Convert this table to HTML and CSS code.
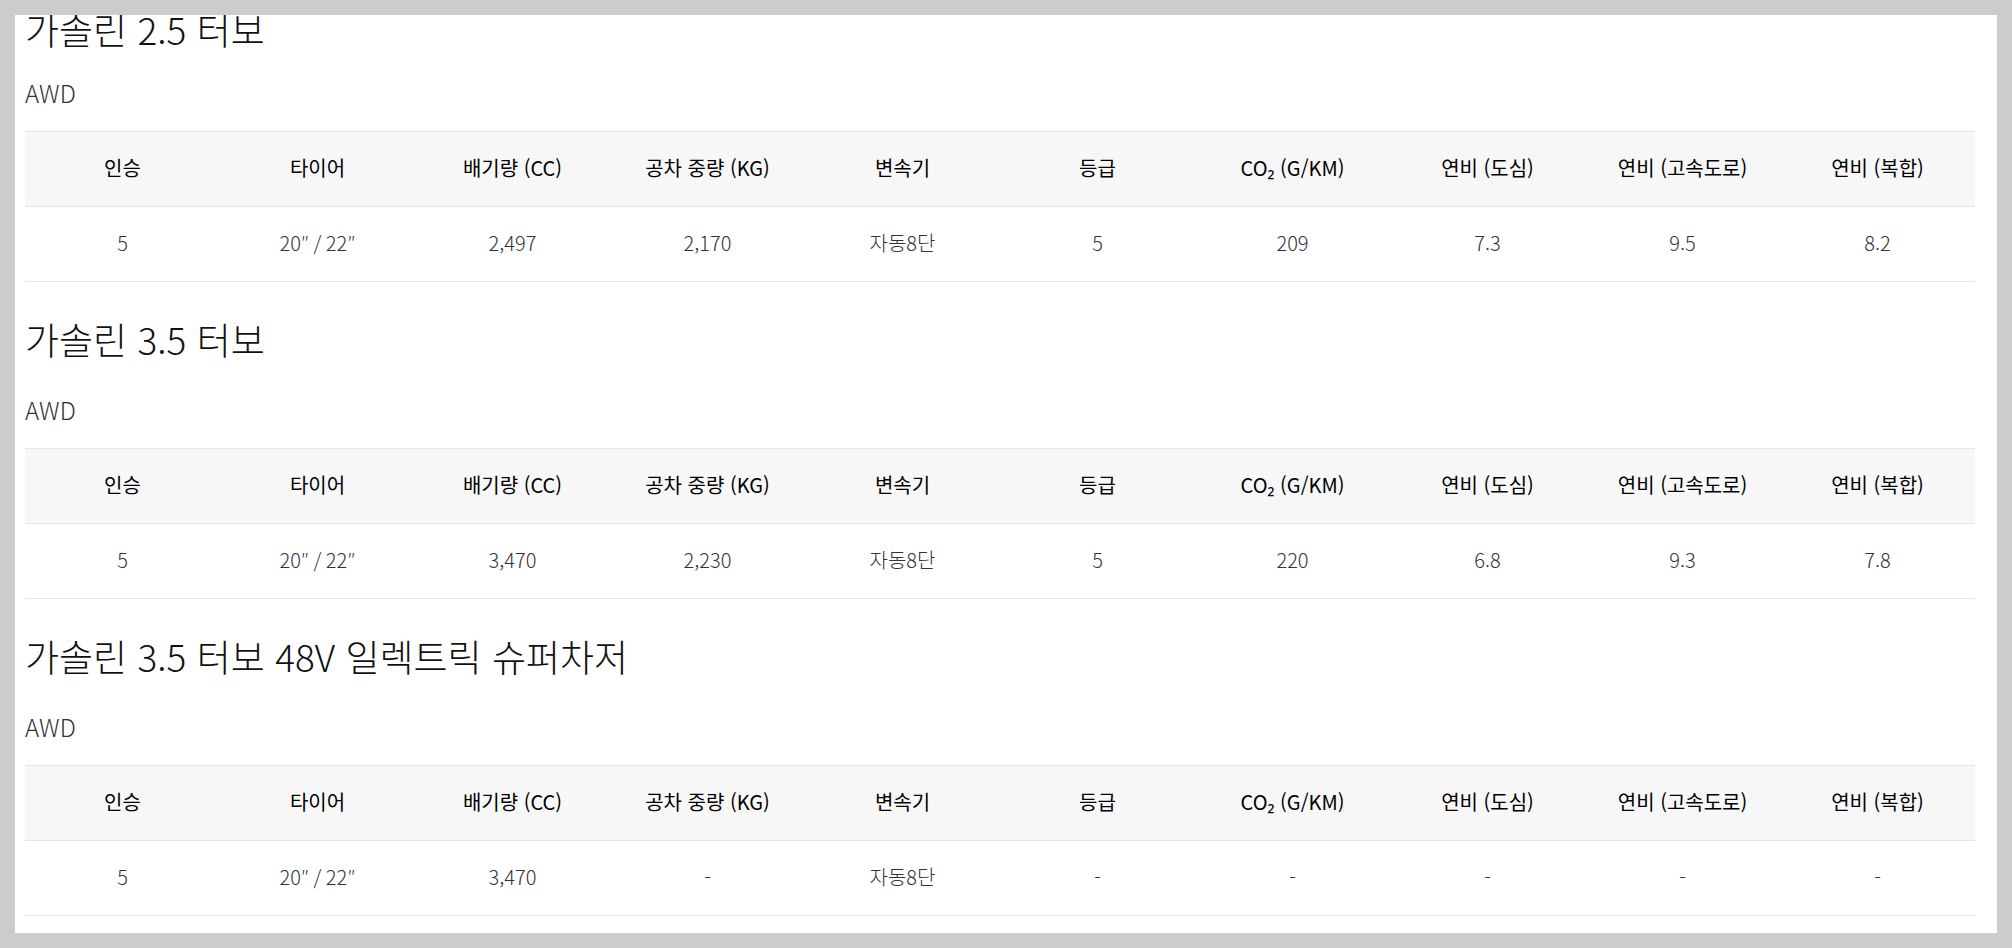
FILE: index.html
```html
<!DOCTYPE html>
<html lang="ko">
<head>
<meta charset="utf-8">
<title>제원</title>
<link rel="stylesheet" href="styles.css">
</head>
<body>
<div class="panel">
  <div class="content">
    <section class="spec">
      <h2 class="spec-title">가솔린 2.5 터보</h2>
      <p class="spec-drive">AWD</p>
      <div class="spec-table">
        <div class="row row-head">
          <div class="cell">인승</div><div class="cell">타이어</div><div class="cell">배기량 (CC)</div><div class="cell">공차 중량 (KG)</div><div class="cell">변속기</div><div class="cell">등급</div><div class="cell">CO₂ (G/KM)</div><div class="cell">연비 (도심)</div><div class="cell">연비 (고속도로)</div><div class="cell">연비 (복합)</div>
        </div>
        <div class="row row-data">
          <div class="cell">5</div><div class="cell">20″ / 22″</div><div class="cell">2,497</div><div class="cell">2,170</div><div class="cell">자동8단</div><div class="cell">5</div><div class="cell">209</div><div class="cell">7.3</div><div class="cell">9.5</div><div class="cell">8.2</div>
        </div>
      </div>
    </section>
    <section class="spec">
      <h2 class="spec-title">가솔린 3.5 터보</h2>
      <p class="spec-drive">AWD</p>
      <div class="spec-table">
        <div class="row row-head">
          <div class="cell">인승</div><div class="cell">타이어</div><div class="cell">배기량 (CC)</div><div class="cell">공차 중량 (KG)</div><div class="cell">변속기</div><div class="cell">등급</div><div class="cell">CO₂ (G/KM)</div><div class="cell">연비 (도심)</div><div class="cell">연비 (고속도로)</div><div class="cell">연비 (복합)</div>
        </div>
        <div class="row row-data">
          <div class="cell">5</div><div class="cell">20″ / 22″</div><div class="cell">3,470</div><div class="cell">2,230</div><div class="cell">자동8단</div><div class="cell">5</div><div class="cell">220</div><div class="cell">6.8</div><div class="cell">9.3</div><div class="cell">7.8</div>
        </div>
      </div>
    </section>
    <section class="spec">
      <h2 class="spec-title">가솔린 3.5 터보 48V 일렉트릭 슈퍼차저</h2>
      <p class="spec-drive">AWD</p>
      <div class="spec-table">
        <div class="row row-head">
          <div class="cell">인승</div><div class="cell">타이어</div><div class="cell">배기량 (CC)</div><div class="cell">공차 중량 (KG)</div><div class="cell">변속기</div><div class="cell">등급</div><div class="cell">CO₂ (G/KM)</div><div class="cell">연비 (도심)</div><div class="cell">연비 (고속도로)</div><div class="cell">연비 (복합)</div>
        </div>
        <div class="row row-data">
          <div class="cell">5</div><div class="cell">20″ / 22″</div><div class="cell">3,470</div><div class="cell">-</div><div class="cell">자동8단</div><div class="cell">-</div><div class="cell">-</div><div class="cell">-</div><div class="cell">-</div><div class="cell">-</div>
        </div>
      </div>
    </section>
  </div>
</div>
</body>
</html>
```
FILE: styles.css
```css
html, body {
  margin: 0;
  padding: 0;
}

body {
  background: #cccccc;
  padding: 15px;
  font-family: "Noto Sans CJK KR", "Noto Sans", sans-serif;
  color: #111;
}

.panel {
  background: #ffffff;
  height: 918px;
  overflow: hidden;
  padding-left: 10px;
}

.content {
  margin-top: -8px;
  width: 1950px;
}

.spec {
  padding-top: 35px;
}

.spec:first-child {
  padding-top: 0;
}

.spec-title {
  margin: 0;
  font-size: 37px;
  line-height: 44px;
  font-weight: 300;
  color: #111;
}

.spec-drive {
  margin: 34px 0 0;
  font-size: 24px;
  line-height: 30px;
  font-weight: 300;
  color: #333;
}

.spec:first-child .spec-drive {
  margin-top: 27px;
}

.spec-table {
  margin-top: 23px;
}

.row {
  display: grid;
  grid-template-columns: repeat(10, 1fr);
  align-items: center;
  height: 74px;
  border-bottom: 1px solid #e4e4e4;
}

.row-head {
  background: #f7f7f7;
  border-top: 1px solid #e4e4e4;
  color: #000;
  font-size: 20px;
  font-weight: 400;
}

.row-data {
  color: #333;
  font-size: 20px;
  font-weight: 300;
}

.cell {
  text-align: center;
  white-space: nowrap;
  padding-bottom: 4px;
}
```
